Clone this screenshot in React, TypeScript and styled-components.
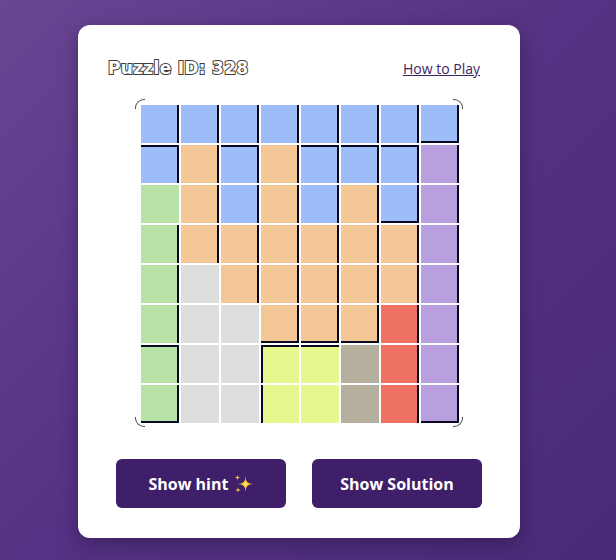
import React from "react";
import styled, { createGlobalStyle } from "styled-components";

const GlobalStyle = createGlobalStyle`
  html, body { margin: 0; padding: 0; }
  body {
    min-height: 560px;
    background: linear-gradient(135deg, #6a4592 0%, #553283 50%, #4a2a76 100%);
    font-family: "Open Sans", "Liberation Sans", sans-serif;
  }
`;

const COLORS: Record<string, string> = {
  B: "#9dbdf9",
  O: "#f4c896",
  P: "#b8a0de",
  G: "#b9e3a6",
  g: "#dedede",
  Y: "#e5f78d",
  T: "#b5b09d",
  R: "#ed7262",
};

const REGIONS = [
  "BBBBBBBB",
  "BOBOBBBP",
  "GOBOBOBP",
  "GOOOOOOP",
  "GgOOOOOP",
  "GggOOORP",
  "GggYYTRP",
  "GggYYTRP",
];

const BORDERS: string[][] = [
  ["r", "r", "r", "r", "r", "r", "r", "rb"],
  ["tr", "r", "tr", "r", "tr", "tr", "tr", "r"],
  ["", "r", "r", "r", "r", "r", "rb", "r"],
  ["r", "r", "r", "r", "r", "r", "r", "r"],
  ["r", "", "r", "r", "r", "r", "r", "r"],
  ["r", "", "", "rb", "rb", "rb", "r", "r"],
  ["tr", "", "", "tl", "t", "", "r", "r"],
  ["rb", "", "", "l", "", "", "r", "rb"],
];

const Page = styled.div`
  padding: 25px 0 0 78px;
`;

const Card = styled.div`
  width: 442px;
  box-sizing: border-box;
  background: #ffffff;
  border-radius: 12px;
  box-shadow: 0 6px 18px rgba(20, 5, 45, 0.35);
  padding: 31px 0 30px;
  display: flex;
  flex-direction: column;
  align-items: center;
`;

const Header = styled.div`
  align-self: stretch;
  height: 24px;
  padding: 0 40px 0 30px;
  display: flex;
  align-items: center;
  justify-content: space-between;
`;

const Title = styled.h1`
  margin: 0;
  font-family: "DejaVu Sans", sans-serif;
  font-size: 17px;
  font-weight: 700;
  color: #ffffff;
  -webkit-text-stroke: 2px #3c3c3c;
  paint-order: stroke fill;
  letter-spacing: 0.3px;
`;

const HelpLink = styled.a`
  font-family: "Open Sans", sans-serif;
  font-size: 14px;
  color: #3b2566;
  text-decoration: underline;
  cursor: pointer;
`;

const Board = styled.div`
  position: relative;
  margin-top: 19px;
  width: 328px;
  height: 328px;
  box-sizing: border-box;
  padding: 6px;
`;

const Corner = styled.span<{ $v: "top" | "bottom"; $h: "left" | "right" }>`
  position: absolute;
  width: 9px;
  height: 9px;
  ${(p) => p.$v}: 0;
  ${(p) => p.$h}: 0;
  border-${(p) => p.$v}: 1px solid #4a4a4a;
  border-${(p) => p.$h}: 1px solid #4a4a4a;
  border-${(p) => p.$v}-${(p) => p.$h}-radius: 9px;
`;

const Grid = styled.div`
  display: grid;
  grid-template-columns: repeat(8, 38px);
  grid-template-rows: repeat(8, 38px);
  gap: 2px;
`;

const Cell = styled.div<{ $color: string; $b: string }>`
  box-sizing: border-box;
  background: ${(p) => p.$color};
  border-style: solid;
  border-color: #0a0820;
  border-top-width: ${(p) => (p.$b.includes("t") ? "2px" : "0")};
  border-right-width: ${(p) => (p.$b.includes("r") ? "2px" : "0")};
  border-bottom-width: ${(p) => (p.$b.includes("b") ? "2px" : "0")};
  border-left-width: ${(p) => (p.$b.includes("l") ? "2px" : "0")};
`;

const Actions = styled.div`
  margin-top: 32px;
  display: flex;
  gap: 26px;
`;

const ActionButton = styled.button`
  width: 170px;
  height: 49px;
  border: none;
  border-radius: 6px;
  background: #3f1f69;
  color: #ffffff;
  font-family: "Open Sans", sans-serif;
  font-size: 16px;
  font-weight: 700;
  display: flex;
  align-items: center;
  justify-content: center;
  gap: 5px;
  cursor: pointer;
`;

const star = (cx: number, cy: number, r: number) =>
  `M${cx} ${cy - r} Q${cx} ${cy} ${cx + r} ${cy} Q${cx} ${cy} ${cx} ${cy + r} Q${cx} ${cy} ${cx - r} ${cy} Q${cx} ${cy} ${cx} ${cy - r}Z`;

const Sparkles = () => (
  <svg width="20" height="20" viewBox="0 0 20 20" aria-hidden="true">
    <path d={star(12.5, 10, 7.5)} fill="#f6c431" />
    <path d={star(12.5, 10, 3)} fill="#fff2a8" />
    <path d={star(4.5, 3.5, 3)} fill="#f6c431" />
    <path d={star(5, 16, 3)} fill="#f6c431" />
  </svg>
);

export default function App() {
  return (
    <>
      <GlobalStyle />
      <Page>
        <Card>
          <Header>
            <Title>Puzzle ID: 328</Title>
            <HelpLink>How to Play</HelpLink>
          </Header>
          <Board>
            <Corner $v="top" $h="left" />
            <Corner $v="top" $h="right" />
            <Corner $v="bottom" $h="left" />
            <Corner $v="bottom" $h="right" />
            <Grid>
              {REGIONS.map((row, r) =>
                row.split("").map((k, c) => (
                  <Cell key={`${r}-${c}`} $color={COLORS[k]} $b={BORDERS[r][c]} />
                ))
              )}
            </Grid>
          </Board>
          <Actions>
            <ActionButton>
              Show hint <Sparkles />
            </ActionButton>
            <ActionButton>Show Solution</ActionButton>
          </Actions>
        </Card>
      </Page>
    </>
  );
}
